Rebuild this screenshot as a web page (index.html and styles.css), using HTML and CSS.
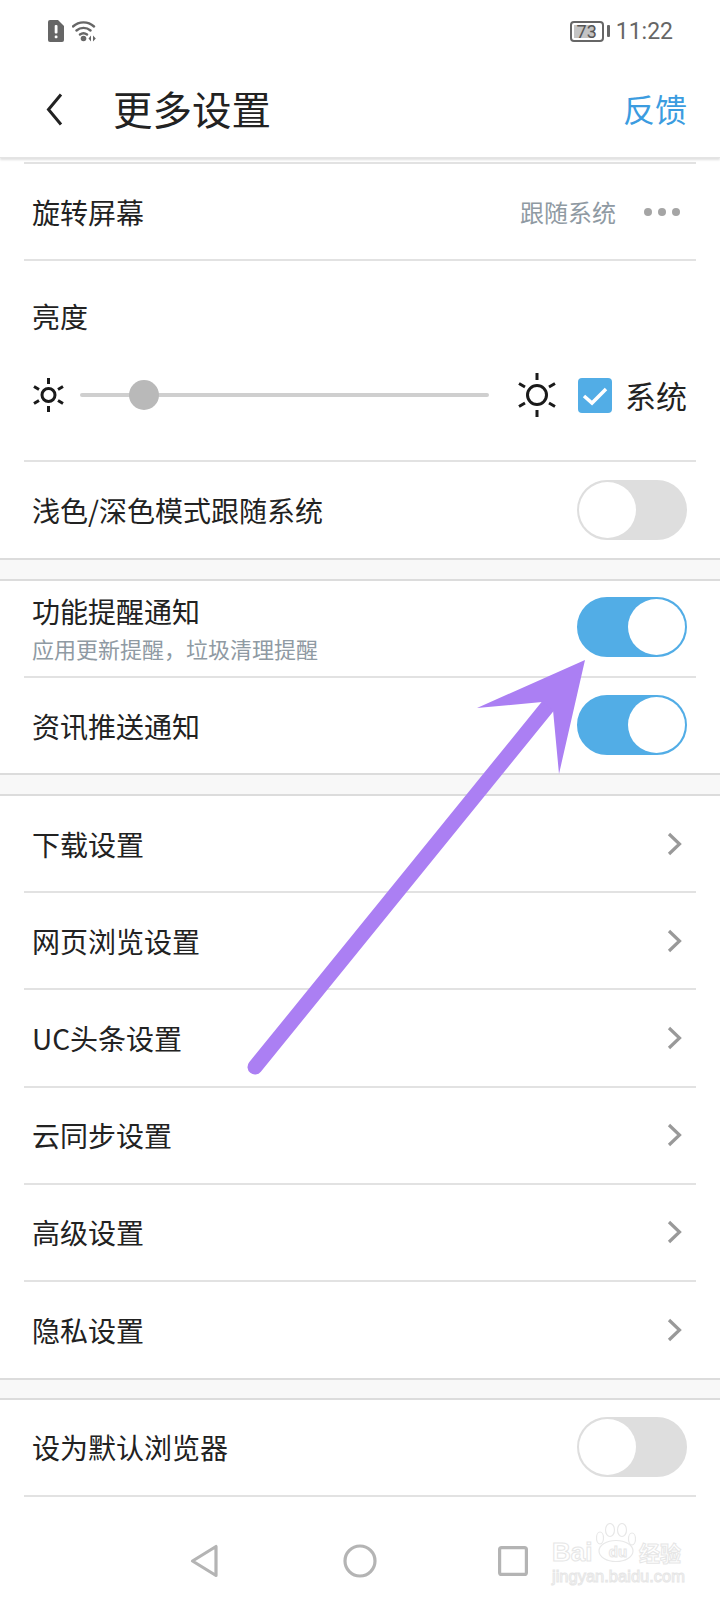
FILE: index.html
```html
<!DOCTYPE html>
<html lang="zh-CN">
<head>
    <meta charset="UTF-8">
    <meta name="viewport" content="width=device-width, initial-scale=1.0">
    <title>更多设置</title>
    <link rel="stylesheet" href="styles.css">
</head>
<body>
    <div class="phone">
        <!-- Status bar -->
        <div class="status-bar">
            <svg class="icon-sim" width="16" height="22" viewBox="0 0 16 22">
                <path d="M2 0h8l6 6v14a2 2 0 0 1-2 2H2a2 2 0 0 1-2-2V2a2 2 0 0 1 2-2z" fill="#666"/>
                <rect x="6.7" y="5" width="2.8" height="8.5" rx="1" fill="#fff"/>
                <rect x="6.7" y="15.5" width="2.8" height="2.8" rx="1" fill="#fff"/>
            </svg>
            <svg class="icon-wifi" width="25" height="22" viewBox="0 0 25 22">
                <path d="M1 6.5C7 1 16 1 22 6.5M4.5 10.5C8.5 7 14.5 7 18.5 10.5M8 14.5C10 13 13 13 15 14.5" fill="none" stroke="#666" stroke-width="2.4" stroke-linecap="round"/>
                <circle cx="11.5" cy="18.5" r="2.8" fill="#666"/>
                <path d="M19 15.5v6l-2.500-3zM21 15.5v6l2.800-3z" fill="#666"/>
            </svg>
            <div class="status-right">
                <div class="battery">
                    <span class="battery-text">73</span>
                </div>
                <div class="battery-nub"></div>
                <span class="time">11:22</span>
            </div>
        </div>

        <!-- Title bar -->
        <div class="title-bar">
            <svg class="icon-back" width="17" height="33" viewBox="0 0 17 33">
                <path d="M15 1.5L2.5 16.5L15 31.5" fill="none" stroke="#222" stroke-width="3"/>
            </svg>
            <h1 class="title">更多设置</h1>
            <span class="feedback">反馈</span>
        </div>

        <!-- Display section -->
        <div class="section section-first">
            <div class="row row-first">
                <span class="row-label">旋转屏幕</span>
                <div class="row-extra">
                    <span class="row-value">跟随系统</span>
                    <div class="dots"><i></i><i></i><i></i></div>
                </div>
            </div>
            <div class="row row-brightness">
                <span class="row-label">亮度</span>
                <div class="slider-line">
                    <svg class="sun-small" width="31" height="34" viewBox="0 0 31 34">
                        <circle cx="15.5" cy="17" r="6.5" fill="none" stroke="#1a1a1a" stroke-width="3"/>
                        <path d="M15.5 0v6M15.5 28v6M1 8.5l5 3M25 22.5l5 3M1 25.5l5-3M25 11.500l5-3" stroke="#1a1a1a" stroke-width="3" fill="none"/>
                    </svg>
                    <div class="slider">
                        <div class="slider-knob"></div>
                    </div>
                    <svg class="sun-big" width="38" height="44" viewBox="0 0 38 44">
                        <circle cx="19" cy="22" r="9.500" fill="none" stroke="#1a1a1a" stroke-width="3"/>
                        <path d="M19 0v7M19 37v7M1 10.500l6 3.500M31 30l6 3.500M1 33.500l6-3.500M31 14l6-3.500" stroke="#1a1a1a" stroke-width="3" fill="none"/>
                    </svg>
                    <svg class="check" width="34" height="35" viewBox="0 0 34 35">
                        <rect width="34" height="35" rx="4" fill="#52ade6"/>
                        <path d="M6 18l8 7L28 11" fill="none" stroke="#fff" stroke-width="3.500"/>
                    </svg>
                    <span class="system-label">系统</span>
                </div>
            </div>
            <div class="row row-dark">
                <span class="row-label">浅色/深色模式跟随系统</span>
                <div class="toggle"></div>
            </div>
        </div>

        <div class="band"></div>

        <!-- Notifications -->
        <div class="section">
            <div class="row row-notify">
                <div class="row-text">
                    <span class="row-label">功能提醒通知</span>
                    <span class="row-sub">应用更新提醒，垃圾清理提醒</span>
                </div>
                <div class="toggle on"></div>
            </div>
            <div class="row row-push">
                <span class="row-label">资讯推送通知</span>
                <div class="toggle on"></div>
            </div>
        </div>

        <div class="band"></div>

        <!-- Sub pages -->
        <div class="section">
            <div class="row row-link">
                <span class="row-label">下载设置</span>
                <svg class="chevron" width="15" height="24" viewBox="0 0 15 24"><path d="M2 2l10.500 10L2 22" fill="none" stroke="#999" stroke-width="3.200"/></svg>
            </div>
            <div class="row row-link">
                <span class="row-label">网页浏览设置</span>
                <svg class="chevron" width="15" height="24" viewBox="0 0 15 24"><path d="M2 2l10.500 10L2 22" fill="none" stroke="#999" stroke-width="3.200"/></svg>
            </div>
            <div class="row row-link">
                <span class="row-label">UC头条设置</span>
                <svg class="chevron" width="15" height="24" viewBox="0 0 15 24"><path d="M2 2l10.500 10L2 22" fill="none" stroke="#999" stroke-width="3.200"/></svg>
            </div>
            <div class="row row-link">
                <span class="row-label">云同步设置</span>
                <svg class="chevron" width="15" height="24" viewBox="0 0 15 24"><path d="M2 2l10.500 10L2 22" fill="none" stroke="#999" stroke-width="3.200"/></svg>
            </div>
            <div class="row row-link">
                <span class="row-label">高级设置</span>
                <svg class="chevron" width="15" height="24" viewBox="0 0 15 24"><path d="M2 2l10.500 10L2 22" fill="none" stroke="#999" stroke-width="3.200"/></svg>
            </div>
            <div class="row row-link row-end">
                <span class="row-label">隐私设置</span>
                <svg class="chevron" width="15" height="24" viewBox="0 0 15 24"><path d="M2 2l10.500 10L2 22" fill="none" stroke="#999" stroke-width="3.200"/></svg>
            </div>
        </div>

        <div class="band band-last"></div>

        <div class="section section-end">
            <div class="row">
                <span class="row-label">设为默认浏览器</span>
                <div class="toggle"></div>
            </div>
        </div>

        <!-- Navigation bar -->
        <div class="nav-bar">
            <svg width="28" height="34" viewBox="0 0 28 34"><path d="M26 2.500V31.500L2.500 17z" fill="none" stroke="#b4b4b4" stroke-width="3.200" stroke-linejoin="round"/></svg>
            <svg class="nav-home" width="34" height="34" viewBox="0 0 34 34"><circle cx="17" cy="17" r="15" fill="none" stroke="#b4b4b4" stroke-width="3.200"/></svg>
            <svg class="nav-recent" width="30" height="30" viewBox="0 0 30 30"><rect x="1.600" y="1.600" width="26.800" height="26.800" rx="2" fill="none" stroke="#b4b4b4" stroke-width="3.200"/></svg>
        </div>

        <!-- Arrow drawn over the screenshot -->
        <svg class="arrow" width="720" height="1600" viewBox="0 0 720 1600">
            <path d="M255 1067L548 706" fill="none" stroke="#ab7ff3" stroke-width="15" stroke-linecap="round"/>
            <path d="M585 660L477 708L542 702L553 710L559 774z" fill="#ab7ff3"/>
        </svg>

        <!-- Watermark -->
        <div class="watermark">
            <svg class="paw" width="40" height="40" viewBox="0 0 40 40">
                <g fill="#fff" stroke="#e8e8e8" stroke-width="1.200">
                    <ellipse cx="4" cy="15" rx="3.500" ry="6"/>
                    <ellipse cx="14" cy="7" rx="4.500" ry="6.500"/>
                    <ellipse cx="26" cy="7" rx="4.500" ry="6.500"/>
                    <ellipse cx="36" cy="16" rx="3.500" ry="6"/>
                    <ellipse cx="20" cy="28" rx="17" ry="10.500"/>
                </g>
            </svg>
            <div class="wm-top">
                <span class="wm-bai">Bai</span>
                <span class="wm-du">du</span>
                <span class="wm-cn">经验</span>
            </div>
            <div class="wm-url">jingyan.baidu.com</div>
        </div>
    </div>
</body>
</html>
```

FILE: styles.css
```css
* {
    margin: 0;
    padding: 0;
    box-sizing: border-box;
}

body {
    background: #fff;
    font-family: "Noto Sans CJK SC", "Noto Sans", sans-serif;
    color: #222;
}

.phone {
    position: relative;
    width: 720px;
    height: 1600px;
    overflow: hidden;
    background: #fff;
}

/* status bar */
.status-bar {
    display: flex;
    align-items: center;
    height: 62px;
    padding: 0 47px 0 48px;
}

.icon-wifi {
    margin-left: 8px;
}

.status-right {
    display: flex;
    align-items: center;
    margin-left: auto;
}

.battery {
    display: flex;
    align-items: center;
    justify-content: center;
    width: 34px;
    height: 21px;
    border: 2px solid #666;
    border-radius: 4px;
    background: linear-gradient(#c4c4c4, #c4c4c4) 2px 2px / 68% 13px no-repeat;
}

.battery-text {
    font-family: "Roboto", sans-serif;
    font-size: 18px;
    line-height: 17px;
    color: #555;
}

.battery-nub {
    width: 3px;
    height: 12px;
    margin-left: 3px;
    border-radius: 1px;
    background: #666;
}

.time {
    margin-left: 6px;
    font-family: "Roboto", sans-serif;
    font-size: 23px;
    color: #666;
}

/* title bar */
.title-bar {
    position: relative;
    display: flex;
    align-items: center;
    height: 96px;
    padding: 0 33px 0 46px;
    border-bottom: 1px solid #e4e4e4;
    box-shadow: 0 2px 2px rgba(0, 0, 0, 0.12);
}

.title {
    margin-left: 50px;
    margin-top: -5px;
    font-size: 39.5px;
    font-weight: 400;
    color: #222;
}

.feedback {
    margin-left: auto;
    margin-top: -4px;
    font-size: 32px;
    color: #3b9ce0;
}

/* settings list */
.section {
    border-top: 2px solid #dcdcdc;
    border-bottom: 2px solid #dcdcdc;
    background: #fff;
}

.section-first {
    border-top: none;
    padding-top: 4px;
}

.section-end {
    border-bottom: none;
}

.band {
    height: 19px;
    background: #f8f8f8;
}

.band-last {
    height: 18px;
}

.row {
    display: flex;
    align-items: center;
    justify-content: space-between;
    height: 97px;
    margin: 0 24px;
    padding: 0 9px 0 8px;
    border-bottom: 2px solid #e2e2e2;
}

.row-first {
    height: 99px;
    border-top: 2px solid #e2e2e2;
}

.row-label {
    font-size: 28px;
    line-height: 40px;
    color: #222;
}

.row-extra {
    display: flex;
    align-items: center;
}

.row-value {
    font-size: 24px;
    color: #8f9aa3;
}

.dots {
    display: flex;
    gap: 6px;
    margin-left: 28px;
    margin-right: 7px;
}

.dots i {
    width: 8px;
    height: 8px;
    border-radius: 50%;
    background: #a5a5a5;
}

/* brightness */
.row-brightness {
    display: block;
    height: 201px;
    padding-top: 35px;
}

.slider-line {
    display: flex;
    align-items: center;
    height: 44px;
    margin-top: 37px;
}

.sun-small {
    margin-left: 1px;
}

.slider {
    display: flex;
    align-items: center;
    width: 409px;
    height: 4px;
    margin-left: 16px;
    border-radius: 2px;
    background: #cfcfcf;
}

.slider-knob {
    width: 30px;
    height: 30px;
    margin-left: 49px;
    border-radius: 50%;
    background: #b9b9b9;
}

.sun-big {
    margin-left: 29px;
}

.check {
    margin-left: 22px;
}

.system-label {
    margin-top: -2px;
    margin-left: 13px;
    font-size: 31px;
}

.row-dark {
    height: 96px;
    border-bottom: none;
}

/* switches */
.toggle {
    display: flex;
    width: 110px;
    height: 60px;
    flex-shrink: 0;
    border: 2px solid #dedede;
    border-radius: 30px;
    background: #dedede;
}

.toggle::after {
    content: '';
    width: 57px;
    height: 56px;
    border-radius: 50%;
    background: #fff;
}

.toggle.on {
    justify-content: flex-end;
    border-color: #52ade6;
    background: #52ade6;
}

/* notifications */
.row-text {
    display: flex;
    flex-direction: column;
    padding-bottom: 5px;
}

.row-sub {
    margin-top: 3px;
    font-size: 22px;
    line-height: 28px;
    color: #8f9aa3;
}

.row-notify .toggle {
    margin-bottom: 4px;
}

.row-push {
    height: 95px;
    border-bottom: none;
}

.row-push .toggle {
    margin-bottom: 2px;
}

/* sub pages */
.row-link {
    height: 97.2px;
}

.row-link .chevron {
    margin-right: 5px;
}

.row-end {
    height: 96px;
    border-bottom: none;
}

/* navigation bar */
.nav-bar {
    display: flex;
    align-items: center;
    height: 128px;
    padding-left: 190px;
}

.nav-home {
    margin-left: 125px;
}

.nav-recent {
    margin-left: 121px;
}

/* overlays */
.arrow {
    position: absolute;
    left: 0;
    top: 0;
    pointer-events: none;
}

.watermark {
    position: absolute;
    left: 552px;
    top: 1523px;
    width: 130px;
    height: 62px;
    color: #fff;
    font-family: "Liberation Sans", sans-serif;
    -webkit-text-stroke: 1px #e6e6e6;
}

.paw {
    position: absolute;
    left: 44px;
    top: 0;
}

.wm-top {
    position: absolute;
    left: 0;
    top: 17px;
    display: flex;
    align-items: center;
    height: 24px;
}

.wm-bai {
    width: 48px;
    font-size: 26px;
    line-height: 24px;
    font-weight: 700;
}

.wm-du {
    position: relative;
    width: 36px;
    font-size: 15px;
    line-height: 24px;
    font-weight: 700;
    text-align: center;
}

.wm-cn {
    margin-left: 3px;
    font-family: "Noto Sans CJK SC", sans-serif;
    font-size: 21px;
    line-height: 24px;
    font-weight: 700;
    white-space: nowrap;
}

.wm-url {
    position: absolute;
    left: 0;
    top: 45px;
    font-size: 16.5px;
    line-height: 16px;
    white-space: nowrap;
}
```
